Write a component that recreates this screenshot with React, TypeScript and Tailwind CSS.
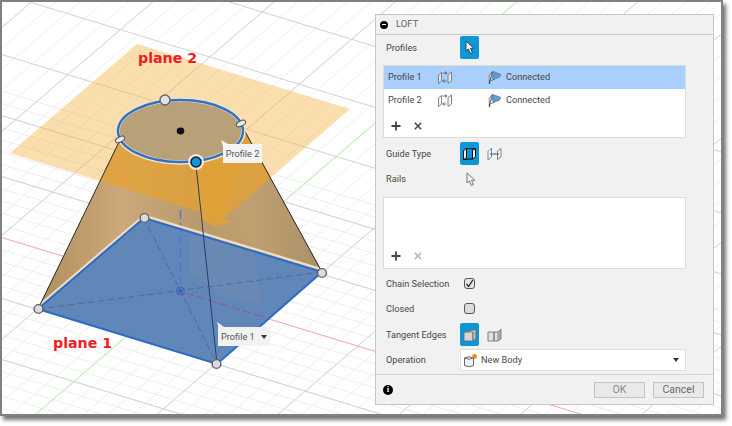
import React from "react";

const font = { fontFamily: '"Roboto", "Liberation Sans", sans-serif' };

function lineA(c: number) {
  // slope of the red axis direction
  return { x1: -20, y1: c - 20 * 0.305, x2: 760, y2: c + 760 * 0.305 };
}

function lineB(c: number) {
  // slope of the green axis direction
  return { x1: -20, y1: c + 20 * 0.858, x2: 760, y2: c - 760 * 0.858 };
}

function range(from: number, to: number) {
  const out: number[] = [];
  for (let i = from; i <= to; i++) out.push(i);
  return out;
}

function Handle({ x, y }: { x: number; y: number }) {
  return <circle cx={x} cy={y} r="4.4" fill="#d9dde3" stroke="#636363" strokeWidth="1.4" />;
}

function Scene() {
  const body = "120,141 38,309 144,218 322,272 242,126";
  return (
    <svg width="719" height="412" viewBox="2 2 719 412" className="block">
      <defs>
        <clipPath id="bodyClip">
          <polygon points={body} />
          <ellipse cx="180.5" cy="131" rx="63" ry="32" />
        </clipPath>
        <linearGradient id="tan" x1="0" y1="0" x2="1" y2="0">
          <stop offset="0" stopColor="#b08f5e" />
          <stop offset="0.3" stopColor="#cca87a" />
          <stop offset="0.55" stopColor="#b99b6d" />
          <stop offset="0.75" stopColor="#c0a070" />
          <stop offset="1" stopColor="#ab9068" />
        </linearGradient>
      </defs>

      {/* grid */}
      {range(-12, 40).map((i) => (
        <line key={"a" + i} {...lineA(237 + i * 12.2)} stroke="#eeeeee" strokeWidth="1" />
      ))}
      {range(-22, 60).map((i) => (
        <line key={"b" + i} {...lineB(445 + i * 20.8)} stroke="#eeeeee" strokeWidth="1" />
      ))}
      {range(-5, 8).map((i) =>
        i === 0 ? null : <line key={"A" + i} {...lineA(237 + i * 61)} stroke="#d2d2d2" strokeWidth="1" />
      )}
      {range(-5, 12).map((i) =>
        i === 0 ? null : <line key={"B" + i} {...lineB(445 + i * 104)} stroke="#d2d2d2" strokeWidth="1" />
      )}
      <line {...lineA(237)} stroke="#fba8a8" strokeWidth="1" />
      <line {...lineB(445)} stroke="#a8f39e" strokeWidth="1" />

      {/* plane 2 */}
      <polygon points="137,44 350,109 223,219 10,153" fill="#f7b84f" fillOpacity="0.46" />

      {/* loft body */}
      <polygon points={body} fill="url(#tan)" />
      <g clipPath="url(#bodyClip)">
        <polygon points="137,44 350,109 223,219 10,153" fill="#e6a22e" fillOpacity="0.72" />
        <polygon points="196,164 243,150 222,218 201,212" fill="#e6a22e" fillOpacity="0.45" />
      </g>

      {/* plane 1 */}
      <polygon points="38,309 144,218 322,272 217,364" fill="#6186b8" />
      <polygon points="190,220 253,241 256,268 262,304 224,298 190,272" fill="#8f96a6" fillOpacity="0.18" />
      <polygon points="190,221 253,241 254,247 190,232" fill="#c9a24f" fillOpacity="0.3" />
      <polygon points="200,212 233,222 216,226 200,219" fill="#e6a22e" fillOpacity="0.8" />
      <line x1="38" y1="309" x2="322" y2="272" stroke="#4d6d9f" strokeWidth="1" strokeDasharray="7 3" />
      <line x1="144" y1="218" x2="217" y2="364" stroke="#4d6d9f" strokeWidth="1" strokeDasharray="7 3" />
      <line x1="180.5" y1="210" x2="180.5" y2="288" stroke="#4f73d6" strokeWidth="1.4" strokeDasharray="9 4" />
      <line x1="184" y1="288" x2="231" y2="248" stroke="#4d9a93" strokeWidth="1" />
      <line x1="185" y1="293" x2="264" y2="317" stroke="#8a5f9a" strokeWidth="1.3" strokeDasharray="9 3" />
      <circle cx="180.5" cy="291" r="4" fill="#5078bb" stroke="#3c66b0" strokeWidth="1" />
      <circle cx="180.5" cy="291" r="1.4" fill="#2f56a0" />

      {/* plane 1 outline */}
      <polyline points="38,306.5 144,215.5 322,269.5" fill="none" stroke="#efdcc2" strokeWidth="2.4" />
      <polygon points="38,309 144,218 322,272 217,364" fill="none" stroke="#2b6cc9" strokeWidth="2" />

      {/* edges */}
      <line x1="119" y1="142" x2="38" y2="309" stroke="#222" strokeWidth="1" />
      <line x1="242" y1="126" x2="322" y2="272" stroke="#222" strokeWidth="1" />
      <line x1="196" y1="165" x2="217" y2="364" stroke="#1f3f70" strokeWidth="1" />

      {/* plane 2 circle */}
      <ellipse cx="180.5" cy="131" rx="63" ry="31.5" fill="#b8a178" stroke="#f3e4c8" strokeWidth="4.5" />
      <ellipse cx="180.5" cy="131" rx="62.5" ry="31" fill="none" stroke="#2f72c6" strokeWidth="2.4" />
      <ellipse cx="180.5" cy="131" rx="3.8" ry="3.4" fill="#0b0f1e" />

      <circle cx="165" cy="100" r="5" fill="#dfe3e8" stroke="#666" strokeWidth="1.4" />
      <ellipse cx="241" cy="123.5" rx="5" ry="2.6" transform="rotate(-28 241 123.5)" fill="#e3e6ea" stroke="#555" strokeWidth="1" />
      <ellipse cx="120" cy="139.5" rx="5" ry="2.6" transform="rotate(-28 120 139.5)" fill="#e3e6ea" stroke="#555" strokeWidth="1" />
      <circle cx="196" cy="162" r="8" fill="#ffffff" fillOpacity="0.75" />
      <circle cx="196" cy="162" r="5" fill="#0e9ad8" stroke="#0a2433" strokeWidth="1.5" />

      <Handle x={38.5} y={309} />
      <Handle x={144.5} y={218} />
      <Handle x={322} y={273} />
      <Handle x={216.5} y={364} />

      {/* tooltip pointers */}
      <polygon points="221,140 228,144 223,146" fill="#f4f4f4" />
      <polygon points="217,322 224,327 219,329" fill="#f4f4f4" />
    </svg>
  );
}

function Cursor({ className, outline }: { className?: string; outline?: boolean }) {
  return (
    <svg width="10" height="15" viewBox="0 0 10 15" className={className}>
      <path
        d="M1 1 L1 11 L3.4 9 L5.4 13.6 L7.4 12.6 L5.5 8.4 L8.8 8.2 Z"
        fill={outline ? "#f4f4f4" : "#f2f2f2"}
        stroke={outline ? "#666" : "#1d3b52"}
        strokeWidth="0.9"
        strokeLinejoin="round"
      />
    </svg>
  );
}

function ProfileIcon() {
  return (
    <svg width="16" height="15" viewBox="0 0 16 15">
      <path d="M1.5 5 L4.5 2.5 V11 L1.5 13.5 Z M11 4.5 L14.5 2 V11 L11 13.5 Z" fill="#f7f7f7" fillOpacity="0.6" stroke="#777" strokeWidth="0.9" />
      <path d="M5.5 3 H9.5 M8 1.5 L10 3 L8 4.5 M9.5 11 H6 M7.5 9.5 L5.5 11 L7.5 12.5" fill="none" stroke="#555" strokeWidth="0.8" />
    </svg>
  );
}

function ConnectedIcon() {
  return (
    <svg width="14" height="15" viewBox="0 0 14 15">
      <path d="M1.5 5 V14" stroke="#444" strokeWidth="1.3" />
      <path d="M1.5 5 L4.5 1.5 L2 10.5 L1.5 11" fill="#f7f7f7" stroke="#555" strokeWidth="0.9" />
      <path d="M5 1.5 L12.5 4.2 L11.8 7 L5.5 9.6 L3.8 6 Z" fill="#5f9ccf" stroke="#4a6f90" strokeWidth="0.6" />
      <path d="M2 11 L6.5 9.2" stroke="#555" strokeWidth="0.8" />
    </svg>
  );
}

function Plus({ faded }: { faded?: boolean }) {
  return (
    <svg width="10" height="10" viewBox="0 0 10 10">
      <path d="M5 .5 V9.5 M.5 5 H9.5" stroke={faded ? "#aaa" : "#444"} strokeWidth="1.8" />
    </svg>
  );
}

function Cross({ faded }: { faded?: boolean }) {
  return (
    <svg width="8" height="8" viewBox="0 0 8 8">
      <path d="M.8 .8 L7.2 7.2 M7.2 .8 L.8 7.2" stroke={faded ? "#b5b5b5" : "#4a4a4a"} strokeWidth="1.6" />
    </svg>
  );
}

function IconButton({ children }: { children: React.ReactNode }) {
  return (
    <div className="flex h-[23px] w-[19px] items-center justify-center rounded-[2px] bg-[#0e96d6]">{children}</div>
  );
}

function Row({ label, height, children }: { label: string; height: string; children?: React.ReactNode }) {
  return (
    <div className={`flex items-center ${height}`}>
      <span className="w-[77px] pl-[3px] text-[9.2px] text-[#484848]">{label}</span>
      {children}
    </div>
  );
}

function ProfileRow({ name, active }: { name: string; active?: boolean }) {
  return (
    <div className={`flex h-[23px] items-center pb-[1px] text-[9.2px] text-[#484848] ${active ? "bg-[#a9cfff]" : ""}`}>
      <span className="w-[53px] pl-[4px]">{name}</span>
      <span className="w-[51px]">
        <ProfileIcon />
      </span>
      <ConnectedIcon />
      <span className="ml-[4px]">Connected</span>
    </div>
  );
}

function LoftPanel() {
  return (
    <div
      className="absolute left-[373px] top-[12px] flex h-[391px] w-[339px] flex-col border border-[#c6c6c6] bg-[#f1f1f1]"
      style={font}
    >
      <div className="flex h-[20px] shrink-0 items-center border-b border-[#c8c8c8] pl-[4px] text-[9.5px] text-[#666]">
        <span className="flex h-[8px] w-[8px] items-center justify-center rounded-full bg-black">
          <span className="h-[1.5px] w-[4px] bg-white" />
        </span>
        <span className="ml-[8px]">LOFT</span>
      </div>

      <div className="flex flex-1 flex-col px-[7px] pt-[1px]">
        <Row label="Profiles" height="h-[23px]">
          <IconButton>
            <Cursor />
          </IconButton>
        </Row>

        <div className="mt-[6px] flex h-[73px] w-[303px] flex-col border border-[#dcdcdc] bg-white">
          <ProfileRow name="Profile 1" active />
          <ProfileRow name="Profile 2" />
          <div className="flex flex-1 items-center gap-[13px] pl-[7px] pt-[2px]">
            <Plus />
            <Cross />
          </div>
        </div>

        <Row label="Guide Type" height="h-[23px] mt-[4px]">
          <IconButton>
            <svg width="15" height="15" viewBox="0 0 15 15">
              <path d="M1.5 5 L4.5 2 V11 L1.5 14 Z M10.5 4.5 L13.5 2.5 V11 L10.5 13 Z" fill="#eef3f6" stroke="#111" strokeWidth="1" />
              <path d="M4.5 2.5 L13 2.8 M2 13.5 L10.5 12.8" stroke="#111" strokeWidth="1.2" />
            </svg>
          </IconButton>
          <span className="ml-[8px]">
            <svg width="15" height="15" viewBox="0 0 15 15">
              <path d="M1 5.5 L4.5 2 V11 L1 14 Z M10.5 5 L14 2.5 V11 L10.5 13.5 Z" fill="#f4f4f4" stroke="#777" strokeWidth="0.9" />
              <path d="M3 8 H12" stroke="#2f6fc4" strokeWidth="1.2" />
            </svg>
          </span>
        </Row>

        <Row label="Rails" height="h-[24px] mt-[2px]">
          <span className="ml-[6px]">
            <Cursor outline />
          </span>
        </Row>

        <div className="mt-[6px] flex h-[72px] w-[303px] items-end gap-[13px] border border-[#dcdcdc] bg-white pb-[7px] pl-[7px]">
          <Plus />
          <span className="pb-[1px]">
            <Cross faded />
          </span>
        </div>

        <Row label="Chain Selection" height="h-[25px] mt-[2px]">
          <span className="ml-[4px] flex h-[11px] w-[11px] items-center justify-center rounded-[3px] border border-[#555] bg-[#e4e4e4]">
            <svg width="9" height="9" viewBox="0 0 9 9">
              <path d="M1.5 5 L3.6 7.5 L7.8 1" fill="none" stroke="#222" strokeWidth="1.2" />
            </svg>
          </span>
        </Row>

        <Row label="Closed" height="h-[25px]">
          <span className="ml-[4px] h-[11px] w-[11px] rounded-[3px] border border-[#555] bg-[#dcdcdc]" />
        </Row>

        <Row label="Tangent Edges" height="h-[23px] mt-[2px]">
          <IconButton>
            <svg width="14" height="14" viewBox="0 0 14 14">
              <path d="M1 4 H10 V13 H1 Z" fill="#d5d5d5" stroke="#666" strokeWidth="0.8" />
              <path d="M1 4 Q8 3.5 13 1 V10 Q12 12.5 10 13 V4" fill="#bdbdbd" stroke="#666" strokeWidth="0.8" />
            </svg>
          </IconButton>
          <span className="ml-[8px]">
            <svg width="15" height="14" viewBox="0 0 15 14">
              <path d="M1 4 H7 V13 H1 Z M7 4 H11 V13 H7 Z" fill="#e2e2e2" stroke="#777" strokeWidth="0.9" />
              <path d="M11 13 L14 11 V1 L11 4" fill="#a9a9a9" stroke="#777" strokeWidth="0.8" />
            </svg>
          </span>
        </Row>

        <Row label="Operation" height="h-[22px] mt-[3px]">
          <div className="flex h-[22px] w-[226px] items-center rounded-[2px] border border-[#dedede] bg-white pl-[2px] pr-[6px] text-[9.2px] text-[#484848]">
            <svg width="15" height="15" viewBox="0 0 15 15">
              <path d="M1.5 5 Q6 2.5 10.5 5 V12.5 Q6 15 1.5 12.5 Z" fill="#f2f2f2" stroke="#555" strokeWidth="0.9" />
              <path d="M1.5 5 Q6 7.5 10.5 5" fill="none" stroke="#555" strokeWidth="0.8" />
              <circle cx="11.5" cy="3.5" r="2.4" fill="#f08a1c" />
            </svg>
            <span className="ml-[3px] flex-1">New Body</span>
            <svg width="6" height="4" viewBox="0 0 6 4">
              <path d="M0 0 H6 L3 4 Z" fill="#333" />
            </svg>
          </div>
        </Row>
      </div>

      <div className="flex h-[30px] shrink-0 items-center justify-between border-t border-[#d4d4d4] pl-[7px] pr-[9px]">
        <span className="flex h-[10px] w-[10px] items-center justify-center rounded-full bg-black font-serif text-[8px] font-bold leading-none text-white">
          i
        </span>
        <div className="flex gap-[8px] text-[10.5px] text-[#6a6a6a]">
          <span className="flex h-[16px] w-[51px] items-center justify-center border border-[#c4c4c4] bg-[#e9e9e9] text-[#888]">
            OK
          </span>
          <span className="flex h-[16px] w-[51px] items-center justify-center border border-[#c4c4c4] bg-[#e9e9e9]">
            Cancel
          </span>
        </div>
      </div>
    </div>
  );
}

export default function App() {
  return (
    <div className="h-[426px] w-[732px] overflow-hidden bg-white pr-[9px]">
      <div className="relative h-[416px] w-[723px] overflow-hidden border-2 border-[#808080] bg-white shadow-[3px_4px_4px_rgba(0,0,0,0.55)]">
        <Scene />

        <span
          className="absolute left-[136px] top-[46px] text-[14.2px] font-bold leading-5 text-[#ee1c25]"
          style={{ fontFamily: '"DejaVu Sans", sans-serif' }}
        >
          plane 2
        </span>
        <span
          className="absolute left-[51px] top-[331px] text-[14.2px] font-bold leading-5 text-[#ee1c25]"
          style={{ fontFamily: '"DejaVu Sans", sans-serif' }}
        >
          plane 1
        </span>

        <div
          className="absolute left-[221px] top-[142px] flex h-[19px] w-[39px] items-center justify-center bg-[#f4f4f4] text-[9.2px] text-[#555]"
          style={font}
        >
          Profile 2
        </div>
        <div
          className="absolute left-[216px] top-[325px] flex h-[19px] w-[52px] items-center gap-[6px] bg-[#f2f2f2] pl-[3px] text-[9.2px] text-[#555]"
          style={font}
        >
          Profile 1
          <svg width="6" height="4" viewBox="0 0 6 4">
            <path d="M0 0 H6 L3 4 Z" fill="#333" />
          </svg>
        </div>

        <LoftPanel />
      </div>
    </div>
  );
}
